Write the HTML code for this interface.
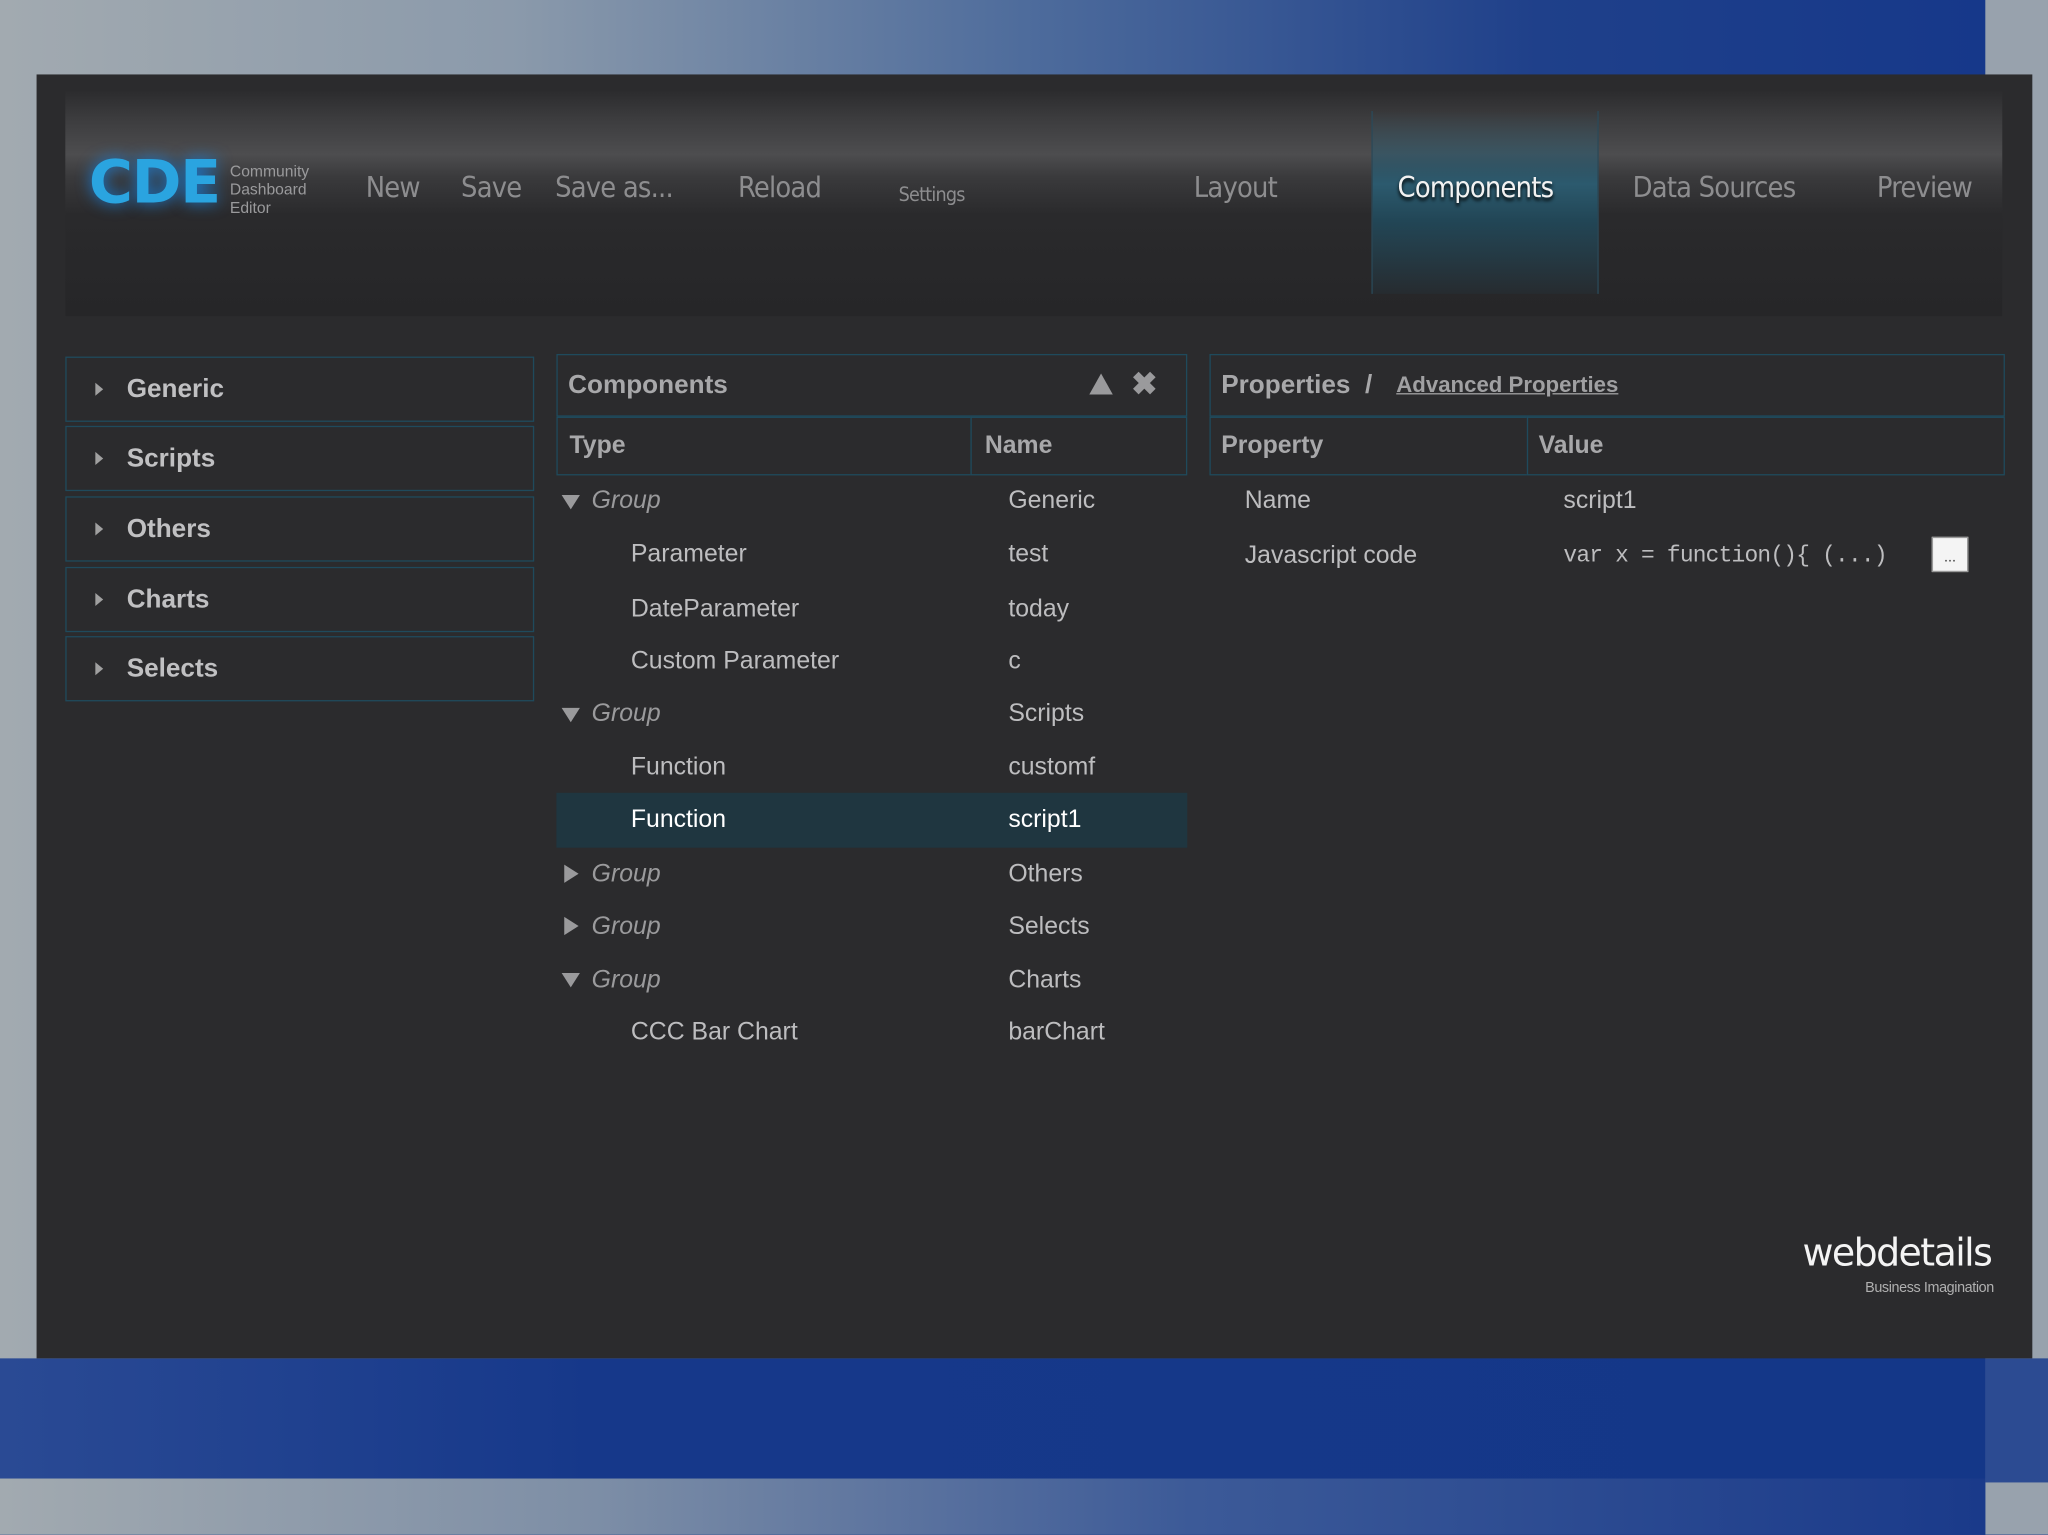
<!DOCTYPE html>
<html><head><meta charset="utf-8"><style>
html,body{margin:0;padding:0;width:2048px;height:1535px;overflow:hidden;background:#1a3a88}
#w{position:absolute;left:0;top:0;width:1568px;height:1175px;transform:scale(1.30612);transform-origin:0 0;font-family:"Liberation Sans",sans-serif;overflow:hidden;
background:linear-gradient(90deg,#a2aab0 0%,#8b9aab 25%,#4e6c9c 50%,#1f408a 75%,#15378a 100%)}
.abs{position:absolute}
#panel{left:28px;top:57px;width:1528px;height:983px;background:#2b2b2d}
#hdr{left:50px;top:70px;width:1483px;height:172px;background:linear-gradient(180deg,#2c2c2e 0%,#3c3c3e 12%,#4d4d4f 28%,#3a3a3c 38%,#2a2a2c 55%,#262628 100%)}
.nav{position:absolute;top:132px;font-size:22px;color:#8d8d8f;font-family:"DejaVu Sans Condensed","Liberation Sans",sans-serif;letter-spacing:-0.6px}
.box{position:absolute;border:1px solid #1f4a5c;background:#2b2b2d;box-sizing:border-box}
.acc{left:50px;width:359px;height:50px;color:#c0c0c2;font-weight:bold;font-size:20px}
.acc span{position:absolute;left:46px;top:13px}
.acc i{position:absolute;left:22px;top:19px;border-left:6px solid #a0a0a0;border-top:5px solid transparent;border-bottom:5px solid transparent}
.t{position:absolute;font-size:19px;color:#bdbdbf}
.th{font-weight:bold;color:#a8a8aa;font-size:19px}
.tri{position:absolute;left:430px;border-top:11px solid #9a9a9c;border-left:7px solid transparent;border-right:7px solid transparent}
.trr{position:absolute;left:432px;border-left:11px solid #9a9a9c;border-top:7px solid transparent;border-bottom:7px solid transparent}
</style></head><body><div id="w">
<div class="abs" style="left:1520px;top:0;width:48px;height:1175px;background:#98a2ad"></div>
<div class="abs" style="left:1520px;top:1040px;width:48px;height:95px;background:#2c4b92"></div>
<div class="abs" style="left:0;top:1132px;width:1520px;height:43px;background:linear-gradient(90deg,#a2aab0,#7d8ea6 30%,#3c5a98 60%,#1a3a8a)"></div>
<div class="abs" style="left:0;top:1040px;width:1520px;height:92px;background:linear-gradient(90deg,#2a4a94,#16388a 30%,#143788)"></div>
<div class="abs" id="panel"></div>
<div class="abs" id="hdr"></div>
<div class="abs" style="left:1050px;top:85px;width:172px;height:140px;background:linear-gradient(180deg,rgba(40,80,100,0) 0%,#2c5a6e 40%,#224656 60%,rgba(34,60,74,0.2) 100%);border-left:1px solid #2a4a5a;border-right:1px solid #2a4a5a"></div>
<div class="abs" style="left:68px;top:112px;font-size:46px;font-weight:bold;color:#2aa4e0;letter-spacing:-1px;text-shadow:0 0 12px #1a7ad0;font-family:'DejaVu Sans',sans-serif">CDE</div>
<div class="abs" style="left:176px;top:124px;font-size:12px;line-height:14px;color:#9a9a9c">Community<br>Dashboard<br>Editor</div>
<div class="nav" style="left:280px">New</div>
<div class="nav" style="left:353px">Save</div>
<div class="nav" style="left:425px">Save as...</div>
<div class="nav" style="left:565px">Reload</div>
<div class="nav" style="left:688px;top:140px;font-size:15px">Settings</div>
<div class="nav" style="left:914px">Layout</div>
<div class="nav" style="left:1070px;color:#f2f2f2;text-shadow:0 2px 3px #000">Components</div>
<div class="nav" style="left:1250px">Data Sources</div>
<div class="nav" style="left:1437px">Preview</div>

<div class="box acc" style="top:273px"><i></i><span>Generic</span></div>
<div class="box acc" style="top:326px"><i></i><span>Scripts</span></div>
<div class="box acc" style="top:380px"><i></i><span>Others</span></div>
<div class="box acc" style="top:434px"><i></i><span>Charts</span></div>
<div class="box acc" style="top:487px"><i></i><span>Selects</span></div>

<div class="box" style="left:426px;top:271px;width:483px;height:48px"></div>
<div class="t th" style="left:435px;top:284px;font-size:20px">Components</div>
<div class="abs" style="left:834px;top:286px;border-bottom:16px solid #9a9a9c;border-left:9px solid transparent;border-right:9px solid transparent"></div>
<div class="abs" style="left:866px;top:280px;font-size:24px;font-weight:bold;color:#9a9a9c">✖</div>
<div class="box" style="left:426px;top:319px;width:318px;height:45px"></div>
<div class="box" style="left:743px;top:319px;width:166px;height:45px"></div>
<div class="t th" style="left:436px;top:331px">Type</div>
<div class="t th" style="left:754px;top:331px">Name</div>
<div class="abs" style="left:426px;top:607px;width:483px;height:42px;background:#1f3640"></div>
<div class="tri" style="top:379px"></div><div class="t" style="left:453px;top:373px;font-style:italic;color:#9a9a9c">Group</div><div class="t" style="left:772px;top:373px">Generic</div>
<div class="t" style="left:483px;top:414px">Parameter</div><div class="t" style="left:772px;top:414px">test</div>
<div class="t" style="left:483px;top:456px">DateParameter</div><div class="t" style="left:772px;top:456px">today</div>
<div class="t" style="left:483px;top:496px">Custom Parameter</div><div class="t" style="left:772px;top:496px">c</div>
<div class="tri" style="top:542px"></div><div class="t" style="left:453px;top:536px;font-style:italic;color:#9a9a9c">Group</div><div class="t" style="left:772px;top:536px">Scripts</div>
<div class="t" style="left:483px;top:577px">Function</div><div class="t" style="left:772px;top:577px">customf</div>
<div class="t" style="left:483px;top:617px;color:#fff">Function</div><div class="t" style="left:772px;top:617px;color:#fff">script1</div>
<div class="trr" style="top:662px"></div><div class="t" style="left:453px;top:659px;font-style:italic;color:#9a9a9c">Group</div><div class="t" style="left:772px;top:659px">Others</div>
<div class="trr" style="top:702px"></div><div class="t" style="left:453px;top:699px;font-style:italic;color:#9a9a9c">Group</div><div class="t" style="left:772px;top:699px">Selects</div>
<div class="tri" style="top:745px"></div><div class="t" style="left:453px;top:740px;font-style:italic;color:#9a9a9c">Group</div><div class="t" style="left:772px;top:740px">Charts</div>
<div class="t" style="left:483px;top:780px">CCC Bar Chart</div><div class="t" style="left:772px;top:780px">barChart</div>

<div class="box" style="left:926px;top:271px;width:609px;height:48px"></div>
<div class="t th" style="left:935px;top:284px;font-size:20px">Properties&nbsp; /</div>
<div class="t" style="left:1069px;top:285px;font-size:17px;font-weight:bold;color:#a0a0a2;text-decoration:underline">Advanced Properties</div>
<div class="box" style="left:926px;top:319px;width:244px;height:45px"></div>
<div class="box" style="left:1169px;top:319px;width:366px;height:45px"></div>
<div class="t th" style="left:935px;top:331px">Property</div>
<div class="t th" style="left:1178px;top:331px">Value</div>
<div class="t" style="left:953px;top:373px">Name</div><div class="t" style="left:1197px;top:373px">script1</div>
<div class="t" style="left:953px;top:415px">Javascript code</div>
<div class="t" style="left:1197px;top:416px;font-family:'Liberation Mono',monospace;font-size:17.5px;letter-spacing:-0.6px">var x = function(){ (...)</div>
<div class="abs" style="left:1479px;top:411px;width:26px;height:25px;background:#f4f4f4;border:1px solid #999;font-size:11px;text-align:center;line-height:30px;color:#333">...</div>

<div class="abs" style="left:1380px;top:942px;font-size:29px;color:#f4f4f4;font-family:'DejaVu Sans',sans-serif;letter-spacing:-1.2px">webdetails</div>
<div class="abs" style="left:1428px;top:980px;font-size:11px;color:#b0b0b0;letter-spacing:-0.3px">Business Imagination</div>
</div></body></html>
